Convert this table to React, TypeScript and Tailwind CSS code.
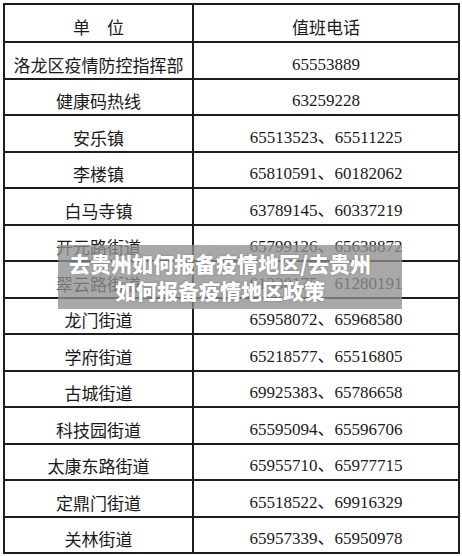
const rows: [string, string][] = [
  ["单　位", "值班电话"],
  ["洛龙区疫情防控指挥部", "65553889"],
  ["健康码热线", "63259228"],
  ["安乐镇", "65513523、65511225"],
  ["李楼镇", "65810591、60182062"],
  ["白马寺镇", "63789145、60337219"],
  ["开元路街道", "65799126、65638872"],
  ["翠云路街道", "61330175、61280191"],
  ["龙门街道", "65958072、65968580"],
  ["学府街道", "65218577、65516805"],
  ["古城街道", "69925383、65786658"],
  ["科技园街道", "65595094、65596706"],
  ["太康东路街道", "65955710、65977715"],
  ["定鼎门街道", "65518522、69916329"],
  ["关林街道", "65957339、65950978"],
];

const cjk = "font-['Noto_Sans_CJK_SC',sans-serif]";
const num = "font-['Liberation_Serif','Noto_Sans_CJK_SC',serif]";

export default function App() {
  return (
    <div className="relative w-[462px] h-[556px] bg-white overflow-hidden">
      <div className="ml-[3px] mt-[3px] w-[457px] border-2 border-[#1c1c1c] text-[#1a1a1a]">
        {rows.map(([unit, phone], i) => (
          <div
            key={unit}
            className={`grid grid-cols-[189px_1fr] ${i % 2 === 0 ? "h-[36px]" : "h-[37px]"} ${
              i > 0 ? "border-t-2 border-[#1c1c1c]" : ""
            }`}
          >
            <div
              className={`flex items-center justify-center pt-2 border-r-2 border-[#1c1c1c] text-[17px] ${cjk}`}
            >
              {unit}
            </div>
            <div
              className={`flex items-center justify-center pt-2 text-[17px] ${i === 0 ? cjk : num}`}
            >
              {phone}
            </div>
          </div>
        ))}
      </div>

      {/* watermark caption laid over the table */}
      <div className="absolute left-[58px] top-[245px] w-[344px] h-[64px] bg-[#8f8f8f]/[0.78] flex flex-col items-center justify-center pr-5 text-white font-black text-[21px] leading-[27px] [text-shadow:0_0_2px_rgba(0,0,0,0.3)] font-['Noto_Sans_CJK_SC',sans-serif]">
        <div>去贵州如何报备疫情地区/去贵州</div>
        <div>如何报备疫情地区政策</div>
      </div>
    </div>
  );
}
